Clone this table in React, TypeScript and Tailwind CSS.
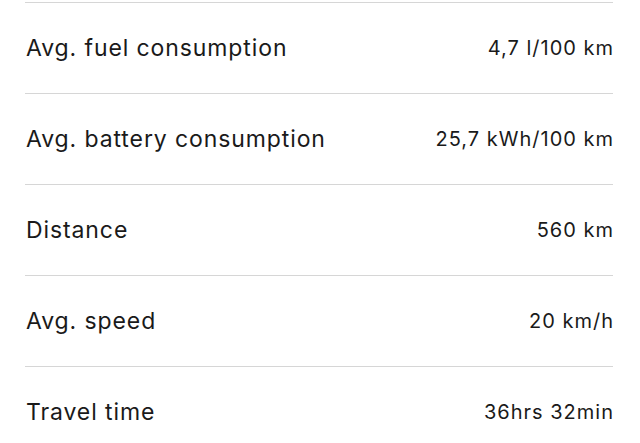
import React from "react";

const rows: [string, string][] = [
  ["Avg. fuel consumption", "4,7 l/100 km"],
  ["Avg. battery consumption", "25,7 kWh/100 km"],
  ["Distance", "560 km"],
  ["Avg. speed", "20 km/h"],
  ["Travel time", "36hrs 32min"],
];

export default function App() {
  return (
    <div className="w-[640px] h-[443px] overflow-hidden bg-white pt-[2px] pl-[25px] pr-[26px]" style={{ fontFamily: "Inter, 'Noto Sans', sans-serif" }}>
      {rows.map(([label, value]) => (
        <div key={label} className="h-[91px] border-t border-[#d6d6d6] mr-[1px] flex items-center justify-between text-[#1a1a1a]">
          <span className="text-[23px] tracking-[0.9px] pl-[1px]">{label}</span>
          <span className="text-[20px] tracking-[1px] -mr-[1px]">{value}</span>
        </div>
      ))}
    </div>
  );
}
